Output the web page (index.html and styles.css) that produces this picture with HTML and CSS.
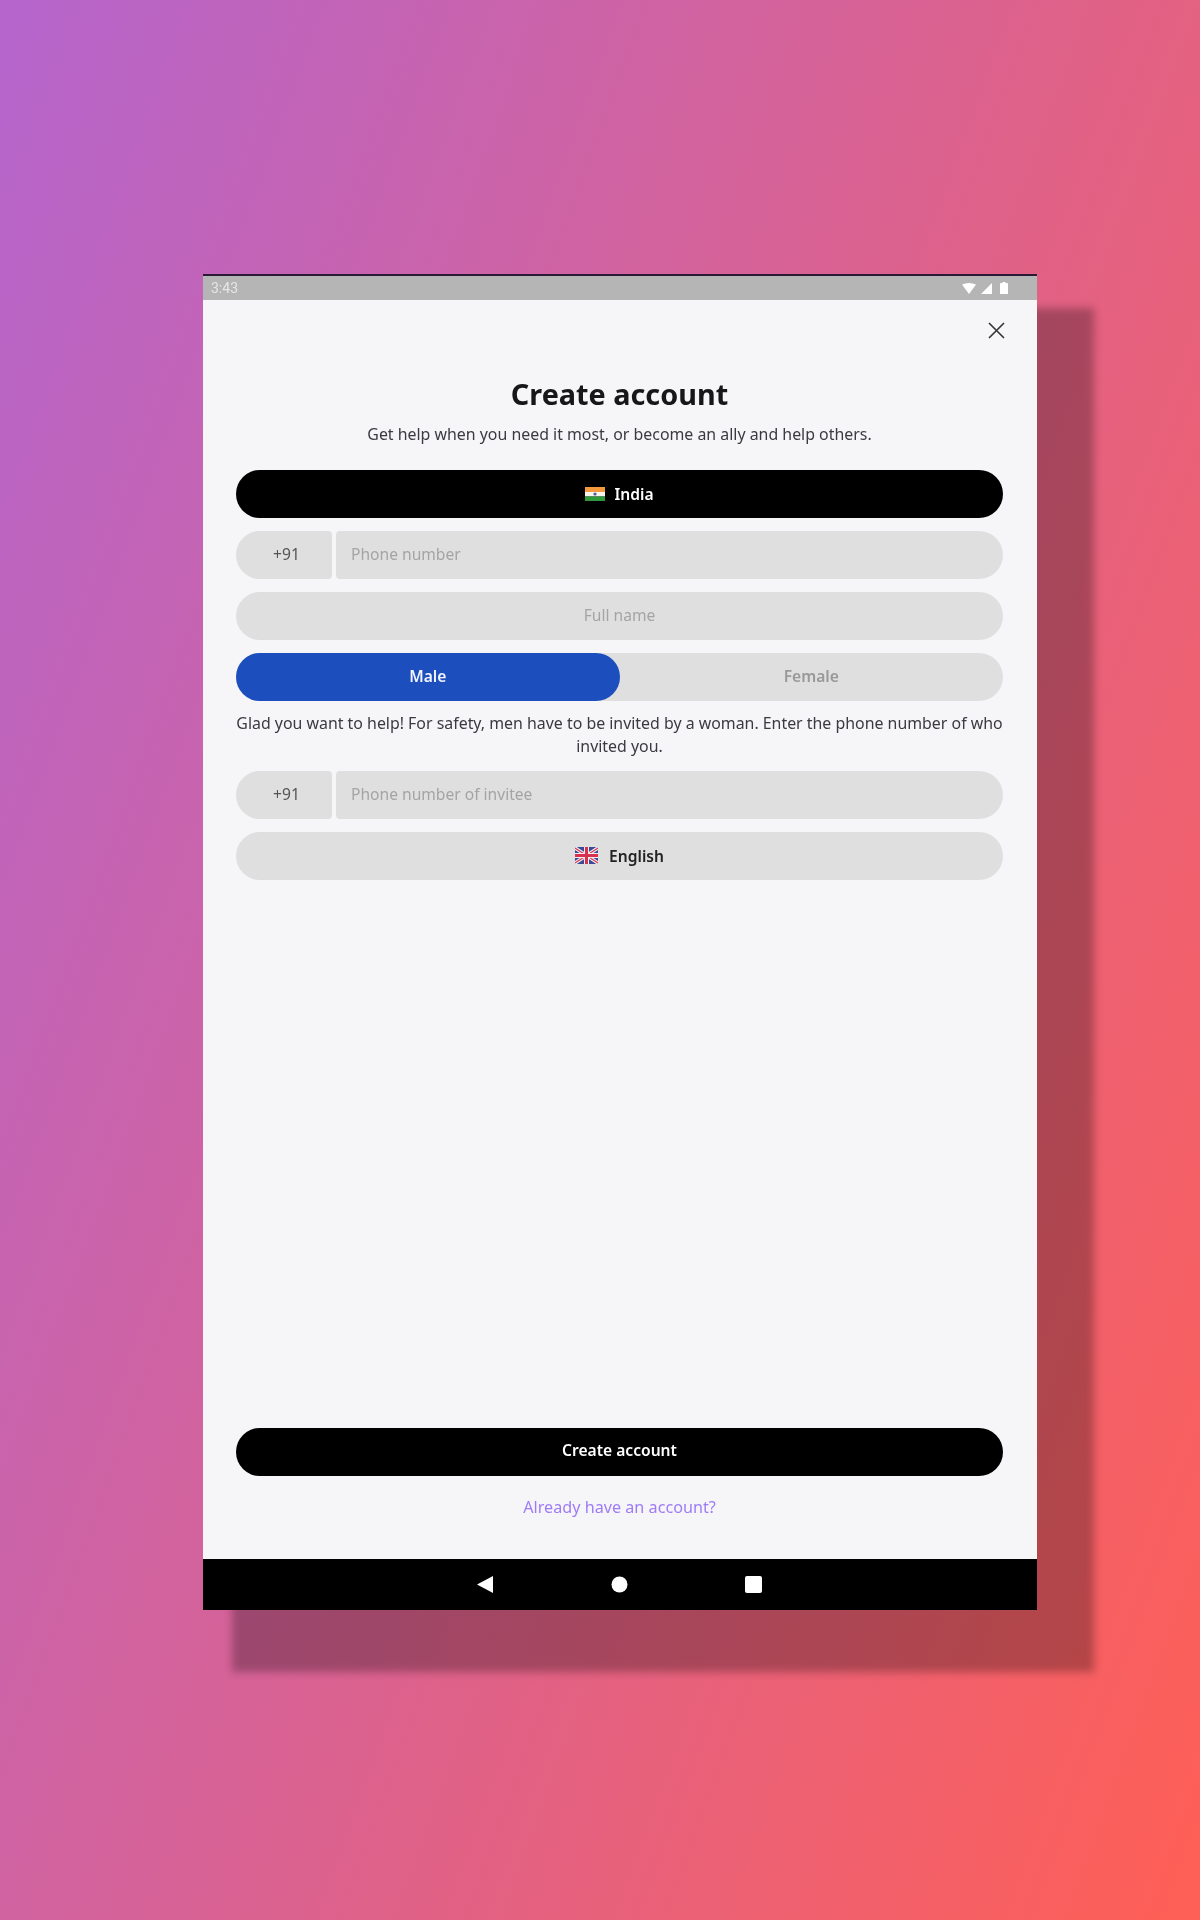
FILE: index.html
```html
<!DOCTYPE html>
<html lang="en">
<head>
<meta charset="utf-8">
<title>Create account</title>
<link rel="stylesheet" href="styles.css">
</head>
<body>
<main class="device">
  <header class="status">
    <span class="time">3:43</span>
    <span class="status-icons">
      <svg class="wifi" viewBox="0 0 14 11"><path d="M0 1.5Q7-1.5 14 1.5L7 11Z"/></svg>
      <svg class="signal" viewBox="0 0 11 11"><path d="M11 0V11H0Z"/></svg>
      <svg class="battery" viewBox="0 0 8 12"><path d="M2.5 0h3v1H7a1 1 0 0 1 1 1v10H0V2a1 1 0 0 1 1-1h1.500Z"/></svg>
    </span>
  </header>
  <section class="screen">
    <div class="close-row">
      <svg class="close" viewBox="0 0 17 17"><path d="M1 1L16 16M16 1L1 16"/></svg>
    </div>
    <h1 class="title">Create account</h1>
    <p class="subtitle">Get help when you need it most, or become an ally and help others.</p>
    <div class="form">
      <button class="pill pill-dark">
        <svg class="flag-in" viewBox="0 0 20 14">
          <rect width="20" height="5" fill="#f59a3c"/>
          <rect y="5" width="20" height="4.500" fill="#f7f4ee"/>
          <rect y="9.500" width="20" height="4.500" fill="#2f9a3c"/>
          <circle cx="10" cy="7" r="1.600" fill="#4a5a9a"/>
        </svg>
        <span>India</span>
      </button>
      <div class="phone-row">
        <span class="prefix">+91</span>
        <span class="number">Phone number</span>
      </div>
      <div class="pill pill-grey placeholder">Full name</div>
      <div class="segment">
        <button class="seg seg-on">Male</button>
        <button class="seg">Female</button>
      </div>
      <p class="help">Glad you want to help! For safety, men have to be invited by a woman. Enter the phone number of who invited you.</p>
      <div class="phone-row">
        <span class="prefix">+91</span>
        <span class="number">Phone number of invitee</span>
      </div>
      <button class="pill pill-grey pill-lang">
        <svg class="flag-uk" viewBox="0 0 23 17">
          <rect width="23" height="17" rx="3" fill="#3a4a94"/>
          <path d="M0 1L23 16M23 1L0 16" stroke="#f2eef0" stroke-width="3.500"/>
          <path d="M0 1L23 16M23 1L0 16" stroke="#d83a55" stroke-width="1.200"/>
          <path d="M11.500 0V17M0 8.500H23" stroke="#f2eef0" stroke-width="5"/>
          <path d="M11.500 0V17M0 8.500H23" stroke="#d8304f" stroke-width="3"/>
        </svg>
        <span>English</span>
      </button>
    </div>
    <div class="actions">
      <button class="pill pill-dark pill-submit">Create account</button>
      <a class="link" href="#">Already have an account?</a>
    </div>
  </section>
  <nav class="navbar">
    <svg class="nav-icon" viewBox="0 0 17 17"><path d="M16 0V17L0 8.500Z"/></svg>
    <svg class="nav-icon" viewBox="0 0 17 17"><circle cx="8.500" cy="8.500" r="8"/></svg>
    <svg class="nav-icon" viewBox="0 0 17 17"><rect width="17" height="17" rx="2"/></svg>
  </nav>
</main>
</body>
</html>
```
FILE: styles.css
```css
* { box-sizing: border-box; }
html, body { margin: 0; }
body {
  height: 1920px;
  padding: 274px 0 0 203px;
  overflow: hidden;
  background: linear-gradient(110deg, #b565cd 0%, #ff5f55 100%);
  font-family: "Noto Sans", "Lato", sans-serif;
}
.device {
  width: 834px;
  height: 1336px;
  display: flex;
  flex-direction: column;
  background: #f6f6f8;
  border-top: 2px solid #2a1a35;
  box-shadow: 43px 48px 8px 14px rgba(0, 0, 0, .27);
}
.status {
  height: 24px;
  flex: none;
  display: flex;
  align-items: center;
  justify-content: space-between;
  padding: 0 29px 0 8px;
  background: #b5b5b5;
}
.time { font: 14px "Roboto", sans-serif; color: #e6e6e6; filter: blur(.4px); }
.status-icons { display: flex; align-items: center; gap: 5px; filter: blur(.4px); }
.status-icons svg { display: block; fill: #fff; }
.wifi { width: 14px; height: 11px; }
.signal { width: 11px; height: 11px; margin-right: 3px; }
.battery { width: 8px; height: 12px; }

.screen {
  flex: 1;
  display: flex;
  flex-direction: column;
  padding: 0 34px 0 33px;
  filter: blur(.45px);
}
.close-row { display: flex; justify-content: flex-end; padding: 22px 0 0; height: 70px; }
.close { width: 17px; height: 17px; margin-right: -2px; fill: none; stroke: #333; stroke-width: 1.600; }
.title {
  margin: 0;
  height: 48px;
  font-size: 28.800px;
  line-height: 48px;
  font-weight: 700;
  text-align: center;
  color: #17171a;
}
.subtitle {
  margin: 0;
  height: 33px;
  padding-top: 4px;
  font-size: 15.900px;
  line-height: 24px;
  text-align: center;
  color: #3a3a40;
}
.form { display: flex; flex-direction: column; gap: 13px; margin-top: 19px; flex: 1; }
.pill {
  height: 48px;
  width: 100%;
  display: flex;
  align-items: center;
  justify-content: center;
  padding-bottom: 2px;
  border: 0;
  border-radius: 24px;
  font: inherit;
  font-size: 15.600px;
}
.pill-dark { background: #000; color: #fff; gap: 9px; font-weight: 600; }
.pill-submit { padding-bottom: 5px; }
.pill-grey { background: #dfdfdf; }
.pill-lang { color: #222; font-weight: 600; gap: 11px; }
.placeholder { color: #a4a4a4; }
.flag-in { width: 20px; height: 14px; }
.flag-uk { width: 23px; height: 17px; }
.phone-row { height: 48px; display: flex; gap: 4px; font-size: 15.600px; }
.prefix {
  width: 96px;
  display: flex;
  align-items: center;
  justify-content: center;
  padding: 0 0 2px 5px;
  border-radius: 24px 4px 4px 24px;
  background: #dfdfdf;
  color: #555;
}
.number {
  flex: 1;
  display: flex;
  align-items: center;
  padding: 0 0 2px 15px;
  border-radius: 4px 24px 24px 4px;
  background: #dfdfdf;
  color: #a4a4a4;
}
.segment { height: 48px; display: flex; border-radius: 24px; background: #dfdfdf; }
.seg {
  flex: 1;
  padding: 0 0 2px;
  border: 0;
  border-radius: 24px;
  background: none;
  font: inherit;
  font-size: 15.600px;
  font-weight: 600;
  color: #999;
}
.seg-on { background: #1c4fbd; color: #f2f4ff; }
.help {
  margin: -2px 0 0;
  font-size: 15.900px;
  line-height: 23px;
  text-align: center;
  color: #3a3a40;
}
.actions { display: flex; flex-direction: column; align-items: center; padding-bottom: 39px; }
.link {
  margin-top: 18px;
  font-size: 16.200px;
  line-height: 26px;
  color: #9f7cf6;
  text-decoration: none;
}
.navbar {
  height: 51px;
  flex: none;
  display: flex;
  align-items: center;
  justify-content: center;
  gap: 117px;
  padding-right: 2px;
  background: #000;
}
.nav-icon { width: 17px; height: 17px; fill: #fff; }
```
